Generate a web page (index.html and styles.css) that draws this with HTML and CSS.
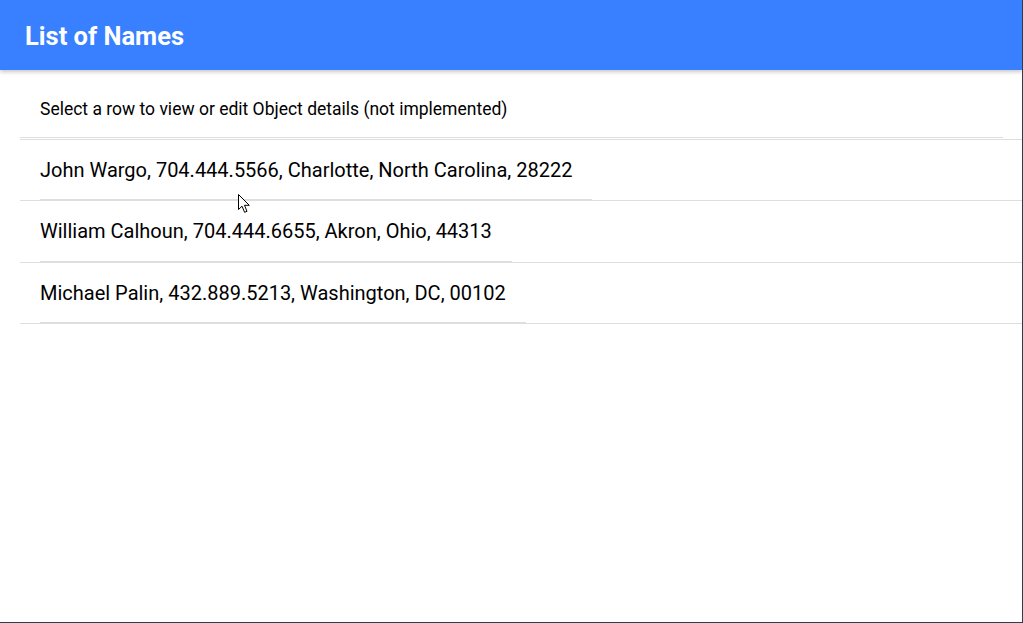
FILE: index.html
```html
<!DOCTYPE html>
<html lang="en">
<head>
<meta charset="utf-8">
<title>List of Names</title>
<link rel="stylesheet" href="styles.css">
</head>
<body>
<div class="app">
  <header class="toolbar">
    <h1 class="title">List of Names</h1>
  </header>
  <main class="content">
    <div class="info">Select a row to view or edit Object details (not implemented)</div>
    <div class="list">
      <div class="row"><span class="label">John Wargo, 704.444.5566, Charlotte, North Carolina, 28222</span></div>
      <div class="row"><span class="label">William Calhoun, 704.444.6655, Akron, Ohio, 44313</span></div>
      <div class="row"><span class="label">Michael Palin, 432.889.5213, Washington, DC, 00102</span></div>
    </div>
  </main>
  <svg class="cursor" width="14" height="20" viewBox="0 0 14 20"><path d="M0.5 0.5 L0.5 15.5 L4 12.2 L6.6 18.3 L9 17.3 L6.5 11.3 L11.3 11.3 Z" fill="#fff" stroke="#000" stroke-width="1" stroke-linejoin="miter"/></svg>
</div>
</body>
</html>
```
FILE: styles.css
```css
html, body {
  margin: 0;
  padding: 0;
  background: #fff;
}
.app {
  position: relative;
  box-sizing: border-box;
  width: 1023px;
  height: 623px;
  border-right: 1px solid #2f3d4a;
  border-bottom: 1px solid #2f3d4a;
  font-family: Roboto, "Liberation Sans", sans-serif;
  color: #000;
  overflow: hidden;
}
.toolbar {
  box-sizing: border-box;
  height: 70px;
  background: #3880ff;
  box-shadow: 0 2px 4px rgba(0, 0, 0, 0.22);
  display: flex;
  align-items: center;
  padding-left: 25px;
  padding-top: 1px;
  position: relative;
  z-index: 1;
}
.title {
  margin: 0;
  color: #fff;
  font-size: 25.5px;
  font-weight: 700;
  line-height: 30px;
}
.content {
  padding-left: 20px;
}
.info {
  margin-right: 19px;
  padding: 29px 0 17.5px 20px;
  font-size: 17.5px;
  line-height: 20px;
  border-bottom: 1px solid #dedede;
}
.list {
  margin-top: 1px;
  border-top: 1px solid #dedede;
}
.row {
  display: flex;
  border-bottom: 1px solid #dedede;
}
.label {
  margin-left: 20px;
  padding: 18px 20px 17.5px 0;
  font-size: 20px;
  line-height: 24px;
  border-bottom: 1px solid #dedede;
}
.cursor {
  position: absolute;
  left: 238px;
  top: 194px;
}
```
